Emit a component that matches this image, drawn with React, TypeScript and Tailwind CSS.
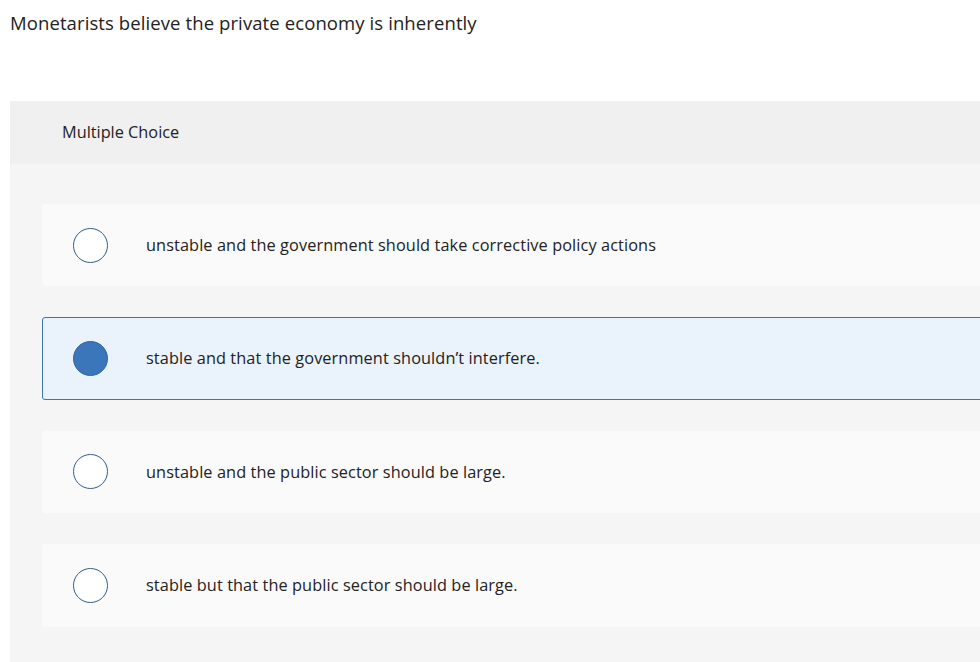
import React from "react";

const options = [
  { text: "unstable and the government should take corrective policy actions", selected: false },
  { text: "stable and that the government shouldn\u2019t interfere.", selected: true },
  { text: "unstable and the public sector should be large.", selected: false },
  { text: "stable but that the public sector should be large.", selected: false },
];

export default function App() {
  return (
    <div
      className="w-[980px] h-[662px] overflow-hidden bg-white text-[#222]"
      style={{ fontFamily: "'Open Sans', sans-serif" }}
    >
      <div className="pl-[10px] pt-[11px] h-[101px]">
        <p className="text-[18.5px] leading-[24px] tracking-[0.1px]">Monetarists believe the private economy is inherently</p>
      </div>
      <div className="ml-[10px] w-[1010px] bg-[#f5f5f5] pb-[35px]">
        <div className="h-[63px] bg-[#f0f0f0] flex items-center pl-[52px]">
          <span className="text-[16.3px]">Multiple Choice</span>
        </div>
        <div className="pt-[40px] pl-[32px] flex flex-col gap-[31px]">
          {options.map((o, i) => (
            <div
              key={i}
              className={
                "h-[82.4px] rounded-[3px] flex items-center pl-[30px] " +
                (o.selected
                  ? "bg-[#eaf2fb] border border-[#3b74b6]"
                  : "bg-[#fafafa] border border-[#fafafa]")
              }
            >
              <span
                className={
                  "w-[35px] h-[35px] rounded-full shrink-0 border-[1.5px] " +
                  (o.selected ? "bg-[#3a76b9] border-[#2f65a3]" : "bg-white border-[#2f5f8f]")
                }
              />
              <span className="ml-[38px] text-[16.3px] tracking-[0.1px]">{o.text}</span>
            </div>
          ))}
        </div>
      </div>
    </div>
  );
}
